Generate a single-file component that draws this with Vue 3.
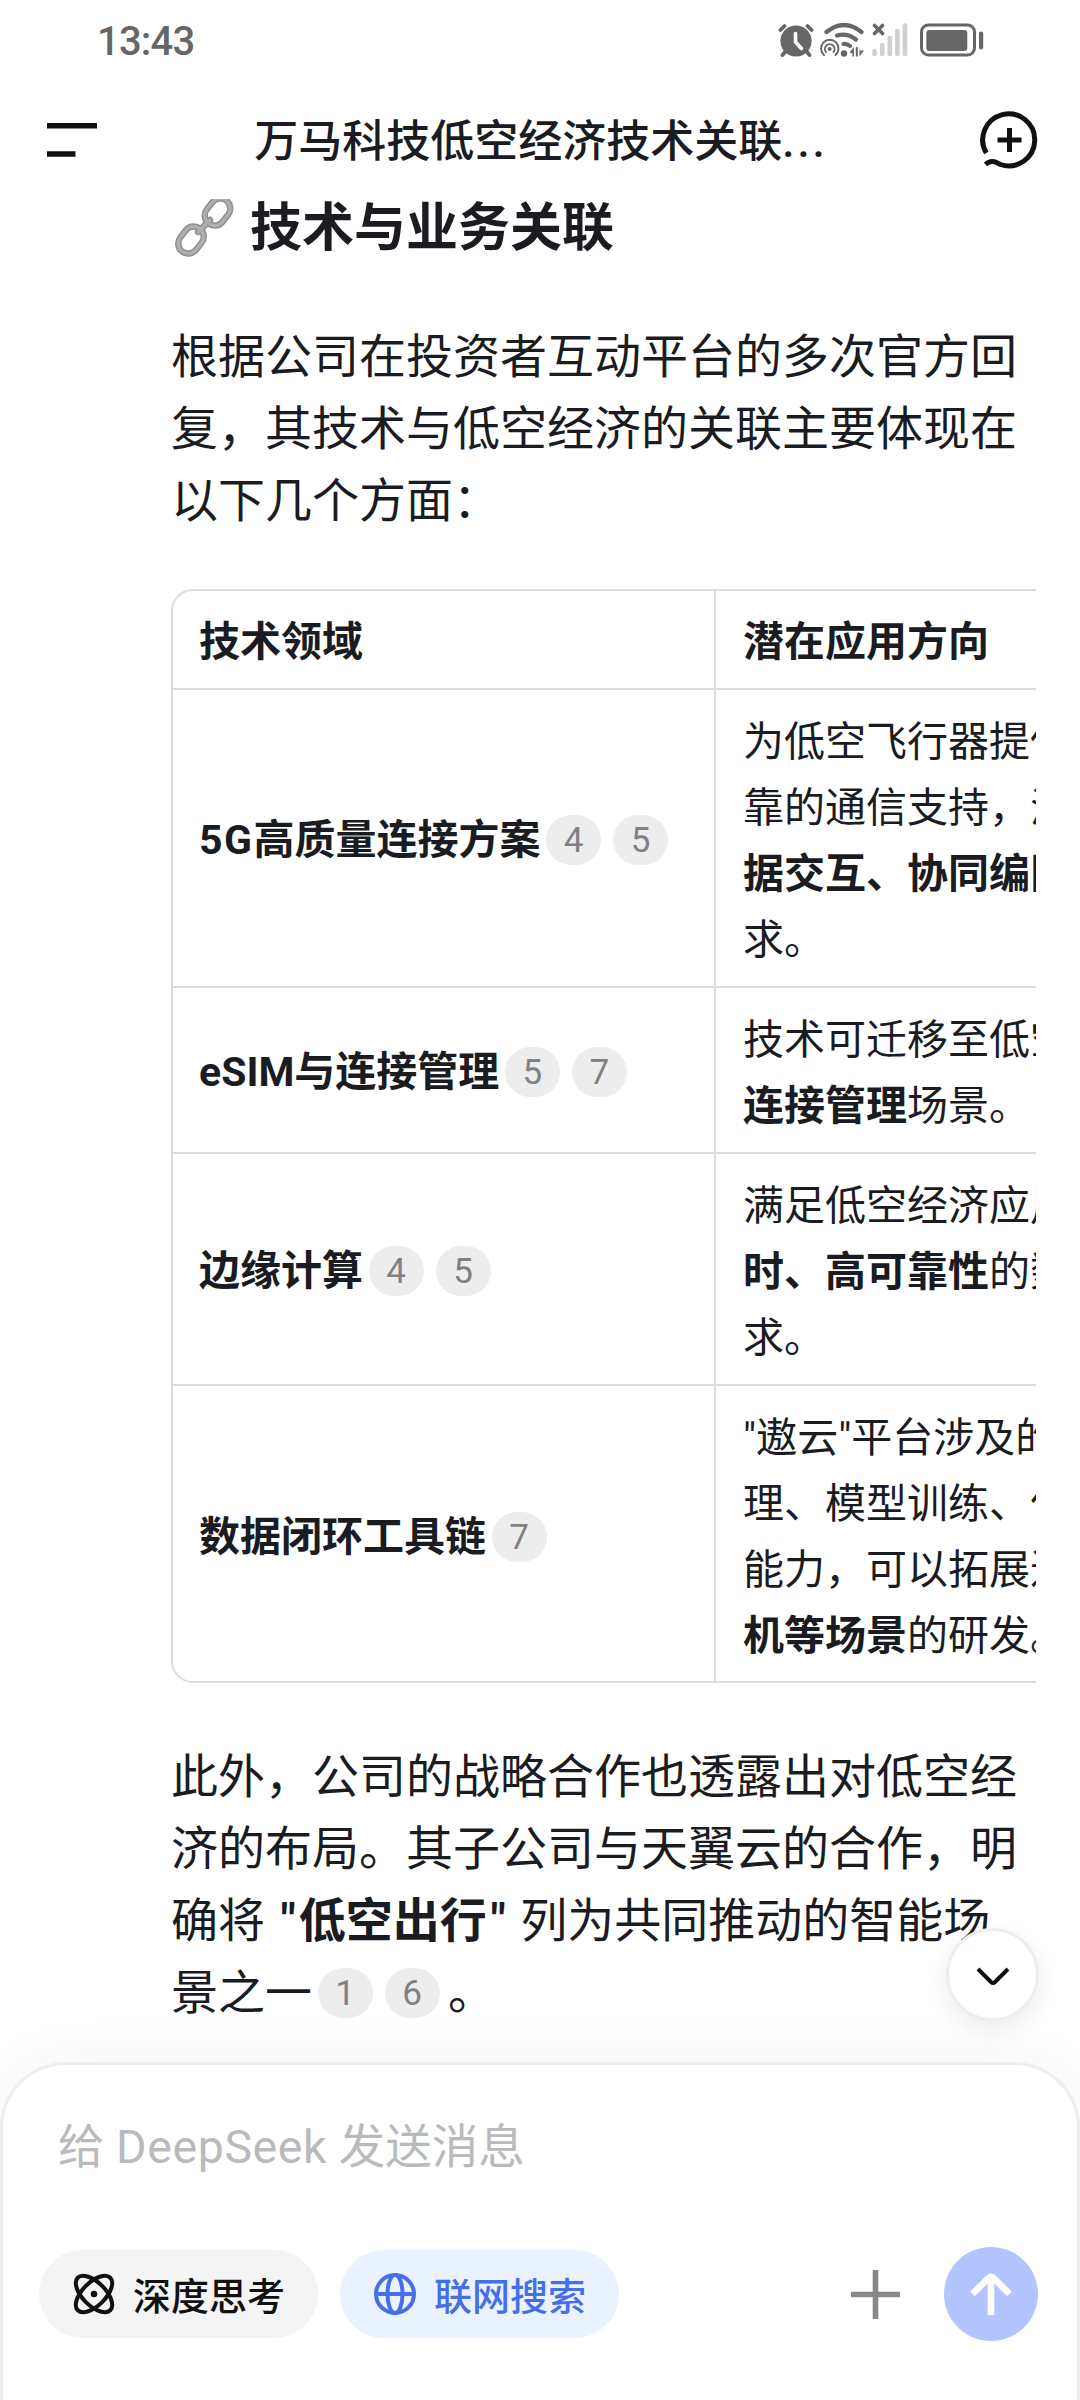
<template>
  <div class="phone">
    <header class="top">
      <div class="status">
        <span class="time">13:43</span>
        <div class="status-icons">
          <svg class="alarm" width="36" height="34" viewBox="0 0 36 34">
            <circle cx="18" cy="18" r="15.6" fill="#666" />
            <path d="M2.5 7 L6.5 3 M33.5 7 L29.5 3 M8 28 L4.5 32 M28 28 L31.5 32" stroke="#666" stroke-width="3.8" stroke-linecap="round" />
            <path d="M17.5 10.5 V19 L23.5 25.5" stroke="#fff" stroke-width="3.6" fill="none" stroke-linecap="round" stroke-linejoin="round" />
          </svg>
          <svg class="wifi" width="46" height="34" viewBox="0 0 46 34">
            <g fill="none" stroke="#666" stroke-linecap="round">
              <path d="M6.5 9 Q24 -5 41.5 9" stroke-width="4.2" />
              <path d="M17 12.5 Q27 9.5 36 16.5" stroke-width="4.2" />
              <path d="M23.5 21 Q27 20.5 30 23" stroke-width="4.2" />
              <path d="M4 32 A8.7 8.7 0 1 1 15.5 32" stroke-width="1.9" />
              <path d="M6 29 A4.8 4.8 0 1 1 13.5 29" stroke-width="1.9" />
            </g>
            <circle cx="9.7" cy="26" r="2" fill="#666" />
            <circle cx="24" cy="30.5" r="3.2" fill="#666" />
            <path d="M29.5 29.5 L34 24 V33.5 H32.5 V30.5 Z M35.8 24 H37.8 V33.5 H35.8 Z M39.5 24 V33.5 L44 27.5 H40 Z" fill="#666" />
          </svg>
          <svg class="signal" width="36" height="34" viewBox="0 0 36 34">
            <path v-for="(top, i) in [28, 22, 15, 8, 2.5]" :key="i" :d="`M${2.6 + i * 7.6} ${top} V31`" stroke="#d0d0d0" stroke-width="4.6" stroke-linecap="round" />
            <path d="M2.5 2.5 L10.5 10.5 M10.5 2.5 L2.5 10.5" stroke="#666" stroke-width="3.6" stroke-linecap="round" />
          </svg>
          <svg class="battery" width="64" height="34" viewBox="0 0 64 34">
            <rect x="1.5" y="2" width="53" height="30" rx="7" fill="none" stroke="#666" stroke-width="3" />
            <rect x="6.3" y="7" width="41" height="21" rx="3" fill="#666" />
            <rect x="59" y="8.5" width="4.2" height="18" rx="2" fill="#666" />
          </svg>
        </div>
      </div>
      <nav class="nav">
        <svg width="50" height="34" viewBox="0 0 50 34">
          <path d="M0 2.8 H50 M0 31 H28.5" stroke="#111" stroke-width="5.6" />
        </svg>
        <h1 class="title">万马科技低空经济技术关联<span class="dots">...</span></h1>
        <svg width="60" height="60" viewBox="0 0 60 60" fill="none" stroke="#111" stroke-width="5">
          <path d="M6.3 43 A26 26 0 1 1 20.5 54.5 C16.5 52.5 11.5 49 5.5 54.5" />
          <path d="M29.5 18 V42 M17.5 30 H41.5" />
        </svg>
      </nav>
    </header>

    <main class="chat">
      <h2 class="heading">
        <svg class="link" width="60" height="60" viewBox="0 0 60 60" fill="none">
          <g stroke="#8f8f8f" stroke-width="6.4">
            <rect x="-10" y="-14.5" width="20" height="29" rx="10" transform="translate(43.5 15) rotate(38)" />
            <rect x="-10" y="-14.5" width="20" height="29" rx="10" transform="translate(17 43) rotate(38)" />
            <path d="M24 35 L36 23" stroke-linecap="round" />
          </g>
          <g stroke="#aeaeae" stroke-width="3.4">
            <rect x="-10" y="-14.5" width="20" height="29" rx="10" transform="translate(43.5 15) rotate(38)" />
            <rect x="-10" y="-14.5" width="20" height="29" rx="10" transform="translate(17 43) rotate(38)" />
            <path d="M24 35 L36 23" stroke-linecap="round" />
          </g>
        </svg>
        <span>技术与业务关联</span>
      </h2>

      <p class="text intro">根据公司在投资者互动平台的多次官方回复，其技术与低空经济的关联主要体现在以下几个方面：</p>

      <div class="table-scroll">
        <div class="table">
          <div class="row head">
            <div class="cell name">技术领域</div>
            <div class="cell">潜在应用方向</div>
          </div>
          <div v-for="row in rows" :key="row.name" class="row">
            <div class="cell name">
              <span v-if="row.prefix" class="prefix">{{ row.prefix }}</span>{{ row.name }}<span v-for="r in row.refs" :key="r" class="ref">{{ r }}</span>
            </div>
            <div class="cell usage">
              <div v-for="(line, i) in row.lines" :key="i" class="line">
                <b v-if="line.bold">{{ line.bold }}</b>{{ line.text }}
              </div>
            </div>
          </div>
        </div>
      </div>

      <p class="text outro">此外，公司的战略合作也透露出对低空经济的布局。其子公司与天翼云的合作，明确将 <b><span class="quote">"</span>低空出行<span class="quote">"</span></b> 列为共同推动的智能场景之一<span class="ref">1</span><span class="ref">6</span><span class="stop">。</span></p>

      <button class="to-bottom" @click="scrollDown">
        <svg width="34" height="20" viewBox="0 0 34 20" fill="none">
          <path d="M2 2 L15 15 Q17 17 19 15 L32 2" stroke="#111" stroke-width="4" />
        </svg>
      </button>
    </main>

    <footer class="composer">
      <div class="placeholder">给 <span class="brand">DeepSeek</span> 发送消息</div>
      <div class="tools">
        <button class="chip" :class="{ on: thinking }" @click="thinking = !thinking">
          <svg width="42" height="42" viewBox="0 0 42 42" fill="none" stroke="currentColor" stroke-width="4">
            <ellipse cx="21" cy="21" rx="23" ry="11.5" transform="rotate(45 21 21)" />
            <ellipse cx="21" cy="21" rx="23" ry="11.5" transform="rotate(-45 21 21)" />
            <circle cx="21" cy="21" r="3.3" fill="currentColor" stroke="none" />
          </svg>
          <span>深度思考</span>
        </button>
        <button class="chip" :class="{ on: searching }" @click="searching = !searching">
          <svg width="42" height="42" viewBox="0 0 42 42" fill="none" stroke="currentColor" stroke-width="4">
            <circle cx="21" cy="21" r="19" />
            <ellipse cx="21" cy="21" rx="7.5" ry="19" />
            <path d="M2 21 H40" />
          </svg>
          <span>联网搜索</span>
        </button>
        <svg class="plus" width="49" height="49" viewBox="0 0 49 49">
          <path d="M24.5 0 V49 M0 24.5 H49" stroke="#888" stroke-width="5.6" />
        </svg>
        <button class="send">
          <svg width="42" height="42" viewBox="0 0 42 42" fill="none" stroke="#fff" stroke-width="6.6">
            <path d="M21 42 V5" />
            <path d="M2.5 21 L18.5 5 Q21 2.5 23.5 5 L39.5 21" />
          </svg>
        </button>
      </div>
    </footer>
  </div>
</template>

<script setup>
import { ref } from 'vue';

const thinking = ref(false);
const searching = ref(true);

const rows = [
  {
    prefix: '5G',
    name: '高质量连接方案',
    refs: [4, 5],
    lines: [
      { text: '为低空飞行器提供' },
      { text: '靠的通信支持，满' },
      { bold: '据交互、协同编队' },
      { text: '求。' },
    ],
  },
  {
    name: 'eSIM与连接管理',
    refs: [5, 7],
    lines: [
      { text: '技术可迁移至低空' },
      { bold: '连接管理', text: '场景。' },
    ],
  },
  {
    name: '边缘计算',
    refs: [4, 5],
    lines: [
      { text: '满足低空经济应用' },
      { bold: '时、高可靠性', text: '的数' },
      { text: '求。' },
    ],
  },
  {
    name: '数据闭环工具链',
    refs: [7],
    lines: [
      { text: '"遨云"平台涉及的' },
      { text: '理、模型训练、仿' },
      { text: '能力，可以拓展进' },
      { bold: '机等场景', text: '的研发。' },
    ],
  },
];

const scrollDown = () => {
  window.scrollTo(0, document.body.scrollHeight);
};
</script>

<style>
body {
  margin: 0;
  background: #fff;
}
</style>

<style scoped>
.phone {
  width: 1080px;
  height: 2400px;
  display: flex;
  flex-direction: column;
  overflow: hidden;
  background: #fff;
  color: #1a1c22;
  font-family: Roboto, "Noto Sans CJK SC", sans-serif;
}

svg {
  display: block;
  flex: none;
}

button {
  border: none;
  padding: 0;
  font-family: inherit;
}

.top {
  height: 199px;
  flex: none;
}

.status {
  height: 80px;
  box-sizing: border-box;
  padding: 0 96px 0 97px;
  display: flex;
  align-items: center;
  justify-content: space-between;
}

.time {
  padding-top: 3px;
  color: #666;
  font-size: 40px;
  font-weight: 500;
  letter-spacing: -0.8px;
  line-height: 77px;
}

.status-icons {
  display: flex;
  align-items: center;
}

.alarm {
  margin-right: 6px;
}

.wifi {
  margin-right: 6px;
}

.signal {
  margin-right: 12px;
}

.nav {
  height: 119px;
  box-sizing: border-box;
  padding: 0 40px 0 47px;
  display: flex;
  align-items: center;
  justify-content: space-between;
}

.title {
  margin: 0;
  padding: 0 0 3px 5px;
  font-size: 44px;
  font-weight: 500;
}

.dots {
  letter-spacing: 3px;
}

.chat {
  flex: 1;
  min-height: 0;
  position: relative;
  overflow: hidden;
  padding: 0 44px 0 171px;
}

.heading {
  display: flex;
  align-items: center;
  gap: 16px;
  height: 56px;
  margin: 0;
  padding-left: 3px;
  font-size: 52px;
  font-weight: 700;
  line-height: 56px;
}

.heading span {
  padding-top: 3px;
}

.text {
  margin: 0;
  padding-right: 6px;
  font-size: 47px;
  line-height: 72px;
}

.intro {
  margin-top: 66px;
}

.outro {
  margin-top: 58px;
}

.quote {
  margin: 0 3px 0 4px;
}

.table-scroll {
  margin-top: 52px;
  overflow: hidden;
}

.table {
  width: 1300px;
  border: 2px solid #ddd;
  border-radius: 22px;
  box-sizing: border-box;
  font-size: 41px;
  line-height: 66px;
}

.row {
  display: flex;
}

.row + .row {
  border-top: 2px solid #ddd;
}

.cell {
  flex: 1;
  padding: 18px 27px 14px;
  white-space: nowrap;
}

.usage {
  padding-top: 19px;
  padding-bottom: 13px;
}

.row:last-child .cell {
  padding-bottom: 12px;
}

.name {
  flex: none;
  width: 543px;
  box-sizing: border-box;
  padding-left: 26px;
  border-right: 2px solid #ddd;
  font-weight: 700;
  display: flex;
  align-items: center;
}

.head {
  font-weight: 700;
}

.head .cell {
  padding-bottom: 13px;
}

.prefix {
  letter-spacing: 1.5px;
}

.ref {
  display: inline-block;
  box-sizing: border-box;
  width: 55px;
  height: 50px;
  padding-right: 1px;
  margin-left: 6px;
  border-radius: 25px;
  background: #ededed;
  color: #808185;
  font-size: 35px;
  font-weight: 400;
  line-height: 51px;
  text-align: center;
  vertical-align: 4px;
}

.ref + .ref {
  margin-left: 12px;
}

.stop {
  margin-left: 8px;
}

.to-bottom {
  position: absolute;
  right: 41px;
  bottom: 41px;
  width: 93px;
  height: 93px;
  display: flex;
  align-items: center;
  justify-content: center;
  border: 3px solid #eee;
  border-radius: 50%;
  background: #fff;
  box-shadow: 0 8px 24px rgba(0, 0, 0, 0.08);
}

.to-bottom svg {
  margin-top: 5px;
}

.composer {
  flex: none;
  position: relative;
  height: 338px;
  box-sizing: border-box;
  border: 3px solid #eee;
  border-bottom: none;
  border-radius: 66px 66px 0 0;
  background: #fff;
  box-shadow: 0 0 60px rgba(0, 0, 0, 0.05);
  padding: 46px 39px 0 36px;
}

.placeholder {
  padding-left: 19px;
  color: #b9babc;
  font-size: 46.5px;
  line-height: 72px;
}

.brand {
  letter-spacing: 0.6px;
}

.tools {
  margin-top: 64px;
  display: flex;
  align-items: center;
}

.chip {
  width: 279px;
  height: 88px;
  margin-right: 22px;
  padding-left: 1px;
  display: flex;
  align-items: center;
  justify-content: center;
  gap: 18px;
  border-radius: 44px;
  background: #f4f4f4;
  color: #111;
  font-size: 38px;
  font-weight: 500;
}

.chip span {
  padding-bottom: 2px;
}

.chip.on {
  background: #ebf2ff;
  color: #456ee8;
}

.plus {
  margin-left: auto;
}

.send {
  width: 94px;
  height: 94px;
  margin-left: 44px;
  display: flex;
  align-items: center;
  justify-content: center;
  border-radius: 50%;
  background: #b3c5ff;
}
</style>
